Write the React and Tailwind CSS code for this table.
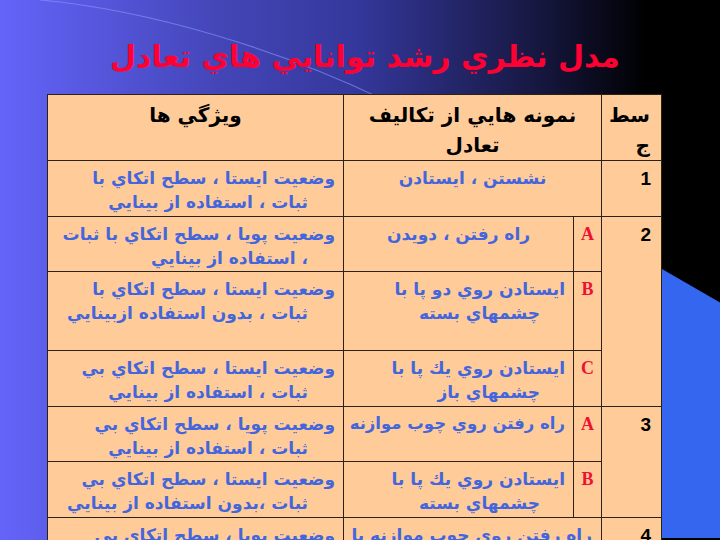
import React from 'react';

const ar = { fontFamily: '"DejaVu Sans", "Noto Sans", sans-serif' };

// each feature is two explicit lines (hanging indent like the slide)
const rows = [
  {
    h: 'h-[56px]',
    feat: ['وضعيت ايستا ، سطح اتكاي با', 'ثبات ، استفاده از بينايي'],
    task: ['نشستن ، ايستادن'],
    center: true,
    span: true,
    level: '1',
    levelSpan: 1,
  },
  {
    h: 'h-[55px]',
    feat: ['وضعيت پويا ، سطح اتكاي با ثبات', '، استفاده از بينايي'],
    task: ['راه رفتن ، دويدن'],
    center: true,
    letter: 'A',
    level: '2',
    levelSpan: 3,
  },
  {
    h: 'h-[79px]',
    feat: ['وضعيت ايستا ، سطح اتكاي با', 'ثبات ، بدون استفاده ازبينايي'],
    task: ['ايستادن روي دو پا با', 'چشمهاي بسته'],
    letter: 'B',
  },
  {
    h: 'h-[56px]',
    feat: ['وضعيت ايستا ، سطح اتكاي بي', 'ثبات ، استفاده از بينايي'],
    task: ['ايستادن روي يك پا با', 'چشمهاي باز'],
    letter: 'C',
  },
  {
    h: 'h-[55px]',
    feat: ['وضعيت پويا ، سطح اتكاي بي', 'ثبات ، استفاده از بينايي'],
    task: ['راه رفتن روي چوب موازنه'],
    small: true,
    letter: 'A',
    level: '3',
    levelSpan: 2,
  },
  {
    h: 'h-[56px]',
    feat: ['وضعيت ايستا ، سطح اتكاي بي', 'ثبات ،بدون استفاده از بينايي'],
    task: ['ايستادن روي يك پا با', 'چشمهاي بسته'],
    letter: 'B',
  },
  {
    h: 'h-[60px]',
    feat: ['وضعيت پويا ، سطح اتكاي بي', 'ثبات ، استفاده از بينايي'],
    task: ['راه رفتن روي چوب موازنه با', 'چشمهاي بسته'],
    span: true,
    level: '4',
    levelSpan: 1,
  },
];

const cell = 'border-[1.5px] border-[#2a2118] align-top';

function Lines({ lines, center, small, first = 'pr-[8px]', rest = 'pr-[35px]' }) {
  return (
    <div
      dir="rtl"
      style={ar}
      className={`${small ? 'text-[16.5px]' : 'text-[17px]'} leading-[24px] font-bold text-[#4466dd] pt-[5px]`}
    >
      {lines.map((l, i) => (
        <div key={i} className={center ? 'text-center' : `text-right whitespace-nowrap ${i === 0 ? first : rest}`}>
          {l}
        </div>
      ))}
    </div>
  );
}

function SlideTable() {
  return (
    <table className="table-fixed border-collapse bg-[#ffcc99] w-[614px]">
      <colgroup>
        <col className="w-[296px]" />
        <col className="w-[230px]" />
        <col className="w-[28px]" />
        <col className="w-[60px]" />
      </colgroup>
      <tbody>
        <tr className="h-[65px]">
          <td className={cell}>
            <div dir="rtl" style={ar} className="text-center text-[20px] font-bold text-black leading-[30px] pt-[5px]">
              ويژگي ها
            </div>
          </td>
          <td className={cell} colSpan={2}>
            <div dir="rtl" style={ar} className="text-center text-[20px] font-bold text-black leading-[30px] pt-[5px]">
              <div>نمونه هايي از تكاليف</div>
              <div>تعادل</div>
            </div>
          </td>
          <td className={cell}>
            <div dir="rtl" style={ar} className="text-right pr-[11px] text-[20px] font-bold text-black leading-[30px] pt-[5px]">
              <div>سط</div>
              <div>ج</div>
            </div>
          </td>
        </tr>
        {rows.map((r, i) => (
          <tr key={i} className={r.h}>
            <td className={cell}>
              <Lines lines={r.feat} />
            </td>
            {r.span ? (
              <td className={cell} colSpan={2}>
                <Lines lines={r.task} center={r.center} first="pr-[9px]" rest="pr-[34px]" />
              </td>
            ) : (
              <>
                <td className={cell}>
                  <Lines lines={r.task} center={r.center} small={r.small} first="pr-[8px]" rest="pr-[33px]" />
                </td>
                <td className={cell}>
                  <div className="text-center text-[18px] font-bold text-[#ee1133] pt-[4px]" style={{ fontFamily: '"Liberation Serif", serif' }}>
                    {r.letter}
                  </div>
                </td>
              </>
            )}
            {r.level && (
              <td className={cell} rowSpan={r.levelSpan}>
                <div className="text-right pr-[10px] text-[19px] font-bold text-black pt-[4px]" style={{ fontFamily: '"Liberation Sans", sans-serif' }}>
                  {r.level}
                </div>
              </td>
            )}
          </tr>
        ))}
      </tbody>
    </table>
  );
}

export default function App() {
  return (
    <div className="relative w-[720px] h-[540px] overflow-hidden bg-[linear-gradient(to_right,#6464fa_0%,#4446b8_30%,#34379a_50%,#16173f_75%,#000_90%)]">
      {/* faint arc of the slide theme */}
      <svg className="absolute inset-0 pointer-events-none" width="720" height="540">
        <path d="M 40 0 C 150 10, 280 50, 380 98" fill="none" stroke="#8c9cff" strokeOpacity="0.55" strokeWidth="1.2" />
      </svg>

      <div className="relative flex flex-col">
        <div className="h-[94px] pt-[20px] pl-[10px] flex items-center justify-center">
          <h1 dir="rtl" style={ar} className="text-[30px] font-bold text-[#ff0033] leading-none">
            مدل نظري رشد توانايي هاي تعادل
          </h1>
        </div>

        <div className="flex pl-[47px]">
          <SlideTable />
          <svg width="59" height="446" className="shrink-0">
            <polygon points="0,175 59,209 59,444 0,444" fill="#3466f0" />
          </svg>
        </div>
      </div>
    </div>
  );
}
